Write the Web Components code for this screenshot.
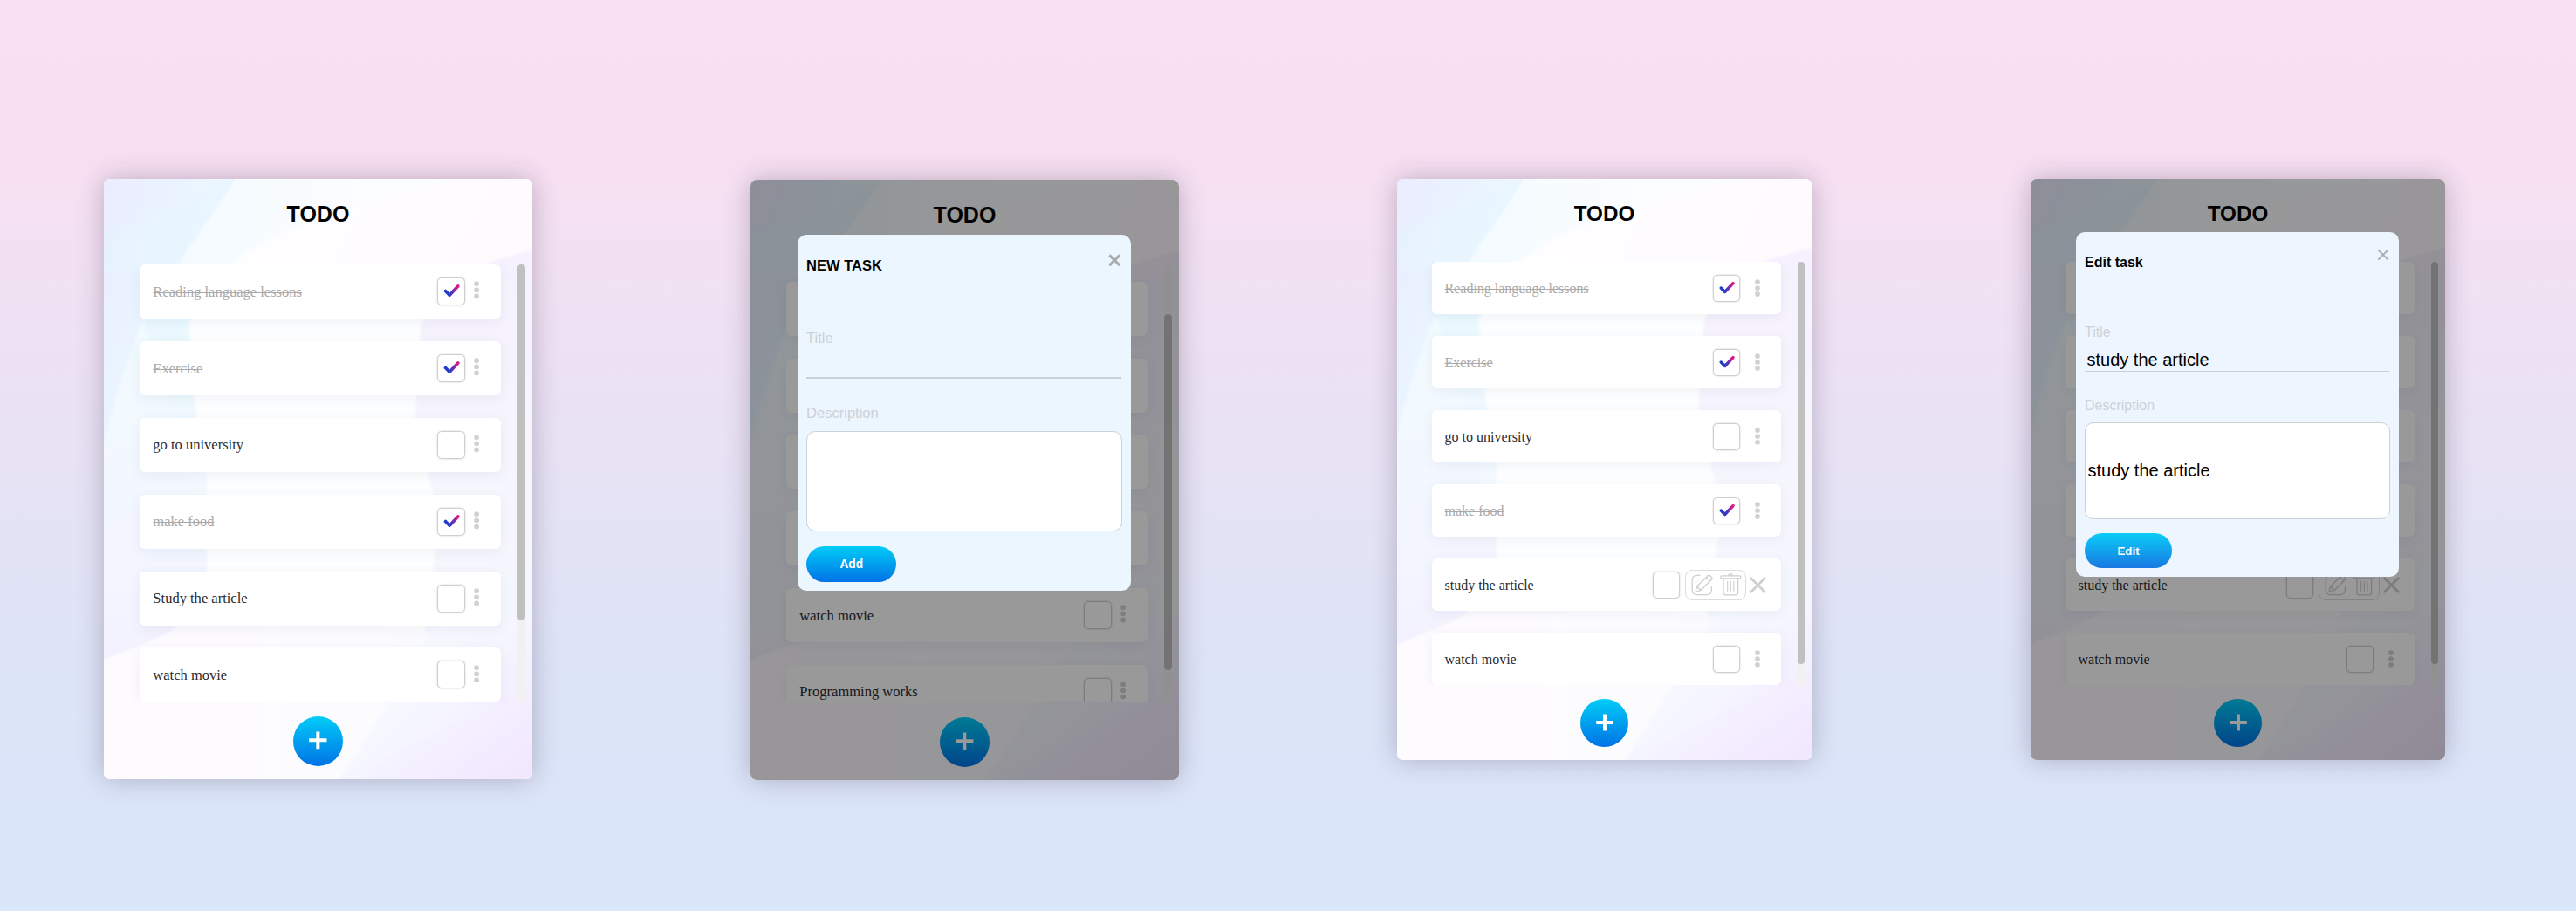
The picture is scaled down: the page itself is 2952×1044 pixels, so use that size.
<!DOCTYPE html>
<html lang="en">
<head>
<meta charset="utf-8">
<title>TODO</title>
<style>
  html { height: 100%; }
  body {
    margin: 0; min-height: 1044px; overflow: hidden;
    background: linear-gradient(180deg, #f9e0f2 0%, #f7e0f2 18%, #e8e2f4 48%, #dde4f7 73%, #dae6fa 100%);
    font-family: "Liberation Sans", Arial, sans-serif;
  }
</style>
</head>
<body>
<todo-gallery></todo-gallery>

<script>
const define = (name, html, setup) => {
  const tpl = document.createElement('template');
  tpl.innerHTML = html;
  customElements.define(name, class extends HTMLElement {
    constructor() {
      super();
      this.attachShadow({ mode: 'open' }).append(tpl.content.cloneNode(true));
    }
    connectedCallback() { if (setup) setup(this, this.shadowRoot); }
  });
};

define('todo-backdrop', `
<style>
  :host { display: block; background: #fdfdff; }
  svg { display: block; width: 100%; height: 100%; }
</style>
<svg viewBox="0 0 475 666" preserveAspectRatio="none" aria-hidden="true">
  <defs>
    <linearGradient id="base" x1="0" y1="0" x2="1" y2="0"><stop offset="0" stop-color="#eaf6ff"/><stop offset=".22" stop-color="#f3fbff"/><stop offset="1" stop-color="#fdfdff"/></linearGradient>
    <linearGradient id="tl" x1="0" y1="0" x2="1" y2=".7"><stop offset="0" stop-color="#ebecfe"/><stop offset=".45" stop-color="#e9f4ff"/><stop offset="1" stop-color="#effbff"/></linearGradient>
    <linearGradient id="left" x1="0" y1="0" x2="0" y2="1"><stop offset="0" stop-color="#f1faff"/><stop offset=".45" stop-color="#f3f8ff"/><stop offset="1" stop-color="#f3f2fe"/></linearGradient>
    <linearGradient id="band" x1="0" y1="0" x2="1" y2="0"><stop offset="0" stop-color="#f4fbff"/><stop offset=".6" stop-color="#fcfdff"/><stop offset="1" stop-color="#fdfcff"/></linearGradient>
    <linearGradient id="mid" x1="0" y1="0" x2="0" y2="1"><stop offset="0" stop-color="#e6f8ff"/><stop offset=".5" stop-color="#f3f9ff"/><stop offset="1" stop-color="#f6faff"/></linearGradient>
    <linearGradient id="right" x1="0" y1="0" x2="0" y2="1"><stop offset="0" stop-color="#f5f1fe"/><stop offset=".5" stop-color="#f6f5fe"/><stop offset="1" stop-color="#f3f8fe"/></linearGradient>
    <linearGradient id="tr" x1="0" y1="0" x2="1" y2=".3"><stop offset="0" stop-color="#fefeff"/><stop offset="1" stop-color="#fefbff"/></linearGradient>
    <linearGradient id="bot" x1="0" y1="0" x2="1" y2="0"><stop offset="0" stop-color="#fefbff"/><stop offset=".6" stop-color="#fcfcff"/><stop offset="1" stop-color="#f9faff"/></linearGradient>
    <linearGradient id="br" x1="0" y1="0" x2="1" y2=".8"><stop offset="0" stop-color="#fafdff"/><stop offset=".5" stop-color="#f5f7ff"/><stop offset="1" stop-color="#f3eafe"/></linearGradient>
    <linearGradient id="corner" x1="0" y1="0" x2="1" y2="1"><stop offset=".35" stop-color="#f3eaff" stop-opacity="0"/><stop offset="1" stop-color="#f2e6fe"/></linearGradient>
    <filter id="soft" x="-5%" y="-5%" width="110%" height="110%"><feGaussianBlur stdDeviation="1.4"/></filter>
  </defs>
  <rect width="475" height="666" fill="url(#base)"/>
  <g filter="url(#soft)">
    <path d="M148 -5 C120 45 95 70 80 100 C60 140 15 230 0 300 L-5 -5Z" fill="url(#tl)"/>
    <path d="M-5 60 C40 45 90 30 122 12 L148 -5 L122 40 L80 100 L-5 103Z" fill="#e5f6ff" opacity=".5"/>
    <path d="M148 -5 L480 -5 L480 20 C360 10 200 40 134 100 L80 100 C95 70 120 45 148 -5Z" fill="url(#band)"/>
    <path d="M480 -5 L400 0 C290 25 190 50 134 100 L134 200 L480 200Z" fill="url(#tr)"/>
    <path d="M80 95 L140 95 L118 300 L118 530 L-5 540 L-5 320 C15 220 50 150 80 95Z" fill="url(#mid)"/>
    <path d="M-5 320 C10 240 30 190 44 155 C70 240 100 330 118 420 L118 480 L-5 536Z" fill="url(#left)"/>
    <path d="M134 95 L94 160 Q96 240 114 330 L114 530 L370 530 L372 370 L352 160 L360 95Z" fill="#fdfeff"/>
    <path d="M480 78 C450 84 425 92 400 104 L352 160 L345 265 L372 380 L350 545 L480 545Z" fill="url(#right)"/>
    <path d="M-5 534 C30 520 55 510 77 498 L110 480 L350 500 L480 545 L480 670 L-5 670Z" fill="url(#bot)"/>
    <path d="M372 485 L480 485 L480 670 L258 670 C285 630 325 570 372 485Z" fill="url(#br)"/>
    <path d="M480 560 C420 590 330 630 260 670 L480 670Z" fill="url(#corner)" opacity=".7"/>
    <path d="M-5 534 C40 516 60 508 78 498" fill="none" stroke="#ececfb" stroke-width="2" opacity=".6"/>
  </g>
</svg>`);

define('check-box', `
<style>
  :host { display: block; box-sizing: border-box; width: 31px; height: 31px; border: 1.3px solid #cfced1; border-radius: 5px; background: transparent; box-shadow: 0 0 1.5px rgba(120,120,125,.5); flex: none; }
  svg { display: none; width: 100%; height: 100%; }
  :host([checked]) svg { display: block; }
</style>
<svg viewBox="0 0 29 29"><defs><linearGradient id="g" gradientUnits="userSpaceOnUse" x1="7" y1="0" x2="24" y2="0"><stop offset=".2" stop-color="#1d3ecb"/><stop offset=".48" stop-color="#4a36c2"/><stop offset=".85" stop-color="#d8188c"/><stop offset="1" stop-color="#f2126e"/></linearGradient></defs>
<path d="M8.2 14 L12.7 18.5 L22 8.6" fill="none" stroke="url(#g)" stroke-width="3.5" stroke-linecap="round" stroke-linejoin="round"/></svg>`);

define('row-dots', `
<style>
  :host { display: block; width: 6px; height: 20px; flex: none; }
  svg { display: block; }
</style>
<svg width="6" height="20" viewBox="0 0 6 20" fill="#d2d0d3"><circle cx="3" cy="3.1" r="2.85"/><circle cx="3" cy="10" r="2.85"/><circle cx="3" cy="16.9" r="2.85"/></svg>`);

define('row-tools', `
<style>
  :host { display: flex; align-items: center; gap: 4px; flex: none; }
  .box { box-sizing: border-box; width: 70px; height: 35px; border: 1px solid #dddce0; border-radius: 8px; display: flex; align-items: center; justify-content: space-between; padding: 0 4.5px 0 6px; }
  svg { display: block; fill: none; stroke: #cfcdd2; stroke-linecap: round; stroke-linejoin: round; }
</style>
<div class="box">
  <svg width="25" height="25" viewBox="0 0 25 25" stroke-width="1.25">
    <path d="M10 1.3 H6.2 A5 5 0 0 0 1.2 6.3 V18.6 A5 5 0 0 0 6.2 23.6 H18.4 A5 5 0 0 0 23.4 18.6 V14.6"/>
    <path d="M5 20.4 L6.7 14 L19 1.7 Q20.3 .4 21.6 1.7 L23.6 3.7 Q24.6 5 23.4 6.2 L11.1 18.5Z M6.7 14 L11.1 18.5 M17.3 3.4 L21.8 7.9"/>
  </svg>
  <svg width="25" height="26" viewBox="0 0 25 26" stroke-width="1.25">
    <path d="M10 2.8 V1.9 Q10 .8 11.1 .8 H13.1 Q14.2 .8 14.2 1.9 V2.8"/>
    <rect x=".9" y="2.8" width="23" height="3" rx="1.2"/>
    <path d="M4 5.9 V22.6 A2.2 2.2 0 0 0 6.2 24.8 H18.4 A2.2 2.2 0 0 0 20.6 22.6 V5.9"/>
    <path d="M8.7 9.2 V20.2 M12.3 9.2 V20.2 M15.9 9.2 V20.2" stroke-width="1.1"/>
  </svg>
</div>
<svg width="19" height="19" viewBox="0 0 19 19" stroke-width="2.8"><path d="M1.7 1.7 L17.3 17.3 M17.3 1.7 L1.7 17.3"/></svg>`);

define('todo-row', `
<style>
  :host { display: flex; align-items: center; box-sizing: border-box; height: 60px; flex: none; background: #fff; border-radius: 6px; padding: 0 24px 0 14.5px; box-shadow: 0 3px 14px rgba(60,70,110,.065); font: 16px "Liberation Serif", "Times New Roman", serif; color: #2b2b2e; }
  .text { flex: 1; white-space: nowrap; padding-top: 1px; }
  :host([done]) .text { color: #aaa; text-decoration: line-through; text-decoration-thickness: 1px; }
  check-box { margin-right: var(--menu-gap, 17px); }
  row-dots { margin-top: var(--dots-shift, 0px); }
  :host([open]) { padding-right: 17px; }
  :host([open]) check-box { margin-right: 6px; }
  :host([blank]) .text, :host([blank]) check-box, :host([blank]) row-dots { display: none; }
</style>
<span class="text"><slot></slot></span><check-box></check-box><span class="end"></span>`,
(host, root) => {
  if (host.hasAttribute('done')) root.querySelector('check-box').setAttribute('checked', '');
  root.querySelector('.end').replaceWith(document.createElement(host.hasAttribute('open') ? 'row-tools' : 'row-dots'));
});

define('scroll-track', `
<style>
  :host { display: flex; width: 8px; background: #f1f1f1; border-radius: 4px 4px 0 0; }
  .thumb { width: 8px; height: var(--thumb, 461px); margin-top: var(--thumb-top, 0px); border-radius: 4px; background: #c0c0c0; }
</style>
<div class="thumb"></div>`);

define('todo-dialog', `
<style>
  :host { display: flex; flex-direction: column; align-items: flex-start; box-sizing: border-box; width: 370px; height: 395px; padding: 0 10px 10px; border-radius: 10px; background: #edf6ff; color: #000; font: 16px "Liberation Sans", Arial, sans-serif; }
  header { display: flex; align-items: flex-start; justify-content: space-between; width: 100%; height: 106px; flex: none; }
  h2 { margin: 26px 0 0; font-size: 16px; line-height: 18px; font-weight: bold; }
  svg { display: block; margin: var(--x-top, 19px) 1px 0 0; fill: none; stroke: #a9abae; stroke-width: var(--x-stroke, 1.9); }
  label { line-height: 18px; color: #cdd1d6; }
  .line { box-sizing: border-box; width: 349px; height: 36px; border-bottom: var(--rule, 1px) solid #cbd0d7; padding: 10.5px 2.5px 0; font-size: 20px; line-height: 23px; margin-bottom: 30px; }
  .area { box-sizing: border-box; width: 350px; height: 110.5px; margin-top: 10px; border: 1px solid #ccd1d8; border-radius: 10px; background: #fff; display: flex; align-items: center; padding: 0 2.5px; font-size: 20px; }
  button { margin: 16.5px 0 0; padding: 0; width: 100px; height: 40px; border: 0; border-radius: 20px; background: var(--action, linear-gradient(#0acdf7, #1878e2)); color: #fff; font: bold 13.333px "Liberation Sans", Arial, sans-serif; }
</style>
<header><h2><slot name="title"></slot></h2>
<svg width="14" height="14" viewBox="0 0 14 14"><path d="M1.3 1.3 L12.7 12.7 M12.7 1.3 L1.3 12.7"/></svg></header>
<label>Title</label><div class="line"><slot name="value"></slot></div>
<label>Description</label><div class="area"><slot name="text"></slot></div>
<button><slot name="action"></slot></button>`);

define('todo-card', `
<style>
  :host { display: grid; box-sizing: border-box; width: 475px; height: 666px; border-radius: 7px; overflow: hidden; flex: none; box-shadow: 0 0 30px rgba(50,30,60,.28); }
  todo-backdrop, .body, .veil { grid-area: 1 / 1; min-width: 0; min-height: 0; }
  .body { display: flex; flex-direction: column; align-items: center; z-index: 1; }
  h1 { margin: 26px 0 42px; font: bold 24.2px/27px "Liberation Sans", Arial, sans-serif; color: #000; }
  .list { display: flex; align-self: stretch; height: 485px; overflow: hidden; flex: none; padding-right: 8px; justify-content: flex-end; }
  .rows { width: 400px; display: flex; flex-direction: column; gap: 25px; box-sizing: border-box; margin-top: var(--scroll, 0px); }
  scroll-track { margin-left: 19px; }
  .add { display: flex; align-items: center; justify-content: center; margin-top: 16px; width: 55px; height: 55px; border-radius: 50%; border: 0; padding: 0 0 1.6px; box-sizing: border-box; background: linear-gradient(#02ccf7, #0073e6); }
  .veil { display: none; z-index: 2; background: rgba(0,0,0,.4); padding: 61px 0 0 52px; box-sizing: border-box; }
  :host([veiled]) .veil { display: block; }
</style>
<todo-backdrop></todo-backdrop>
<div class="body">
  <h1>TODO</h1>
  <div class="list"><div class="rows"><slot></slot></div><scroll-track></scroll-track></div>
  <button class="add" aria-label="Add"><svg width="20" height="20" viewBox="0 0 20 20"><path d="M10 .5V19.5M.2 10H19.8" stroke="#fff" stroke-width="3.9"/></svg></button>
</div>
<div class="veil"><slot name="dialog"></slot></div>`);

define('todo-gallery', `
<style>
  :host { display: flex; align-items: flex-start; padding: 205px 0 0 119px; }
  .large { zoom: 1.0337; --thumb: 395px; --menu-gap: 9.5px; --dots-shift: -3px; }
  .one { margin-right: 241.85px; }
  .two { margin: .9px 241.85px 0 0; --scroll: 18px; --thumb-top: 54px; --x-stroke: 2.9; --x-top: 21.5px; --rule: 2px; --action: linear-gradient(#02ccf7, #0072e6); }
  .two todo-dialog { background: #ebf6ff; }
  .three { margin-right: 251px; }
</style>
<todo-card class="large one">
  <todo-row done>Reading language lessons</todo-row>
  <todo-row done>Exercise</todo-row>
  <todo-row>go to university</todo-row>
  <todo-row done>make food</todo-row>
  <todo-row>Study the article</todo-row>
  <todo-row>watch movie</todo-row>
</todo-card>
<todo-card class="large two" veiled>
  <todo-row blank></todo-row><todo-row blank></todo-row><todo-row blank></todo-row><todo-row blank></todo-row>
  <todo-row>watch movie</todo-row>
  <todo-row>Programming works</todo-row>
  <todo-dialog slot="dialog"><span slot="title">NEW TASK</span><span slot="action">Add</span></todo-dialog>
</todo-card>
<todo-card class="three">
  <todo-row done>Reading language lessons</todo-row>
  <todo-row done>Exercise</todo-row>
  <todo-row>go to university</todo-row>
  <todo-row done>make food</todo-row>
  <todo-row open>study the article</todo-row>
  <todo-row>watch movie</todo-row>
</todo-card>
<todo-card class="four" veiled>
  <todo-row blank></todo-row><todo-row blank></todo-row><todo-row blank></todo-row><todo-row blank></todo-row>
  <todo-row open>study the article</todo-row>
  <todo-row>watch movie</todo-row>
  <todo-dialog slot="dialog"><span slot="title">Edit task</span><span slot="value">study the article</span><span slot="text">study the article</span><span slot="action">Edit</span></todo-dialog>
</todo-card>`);
</script>
</body>
</html>
